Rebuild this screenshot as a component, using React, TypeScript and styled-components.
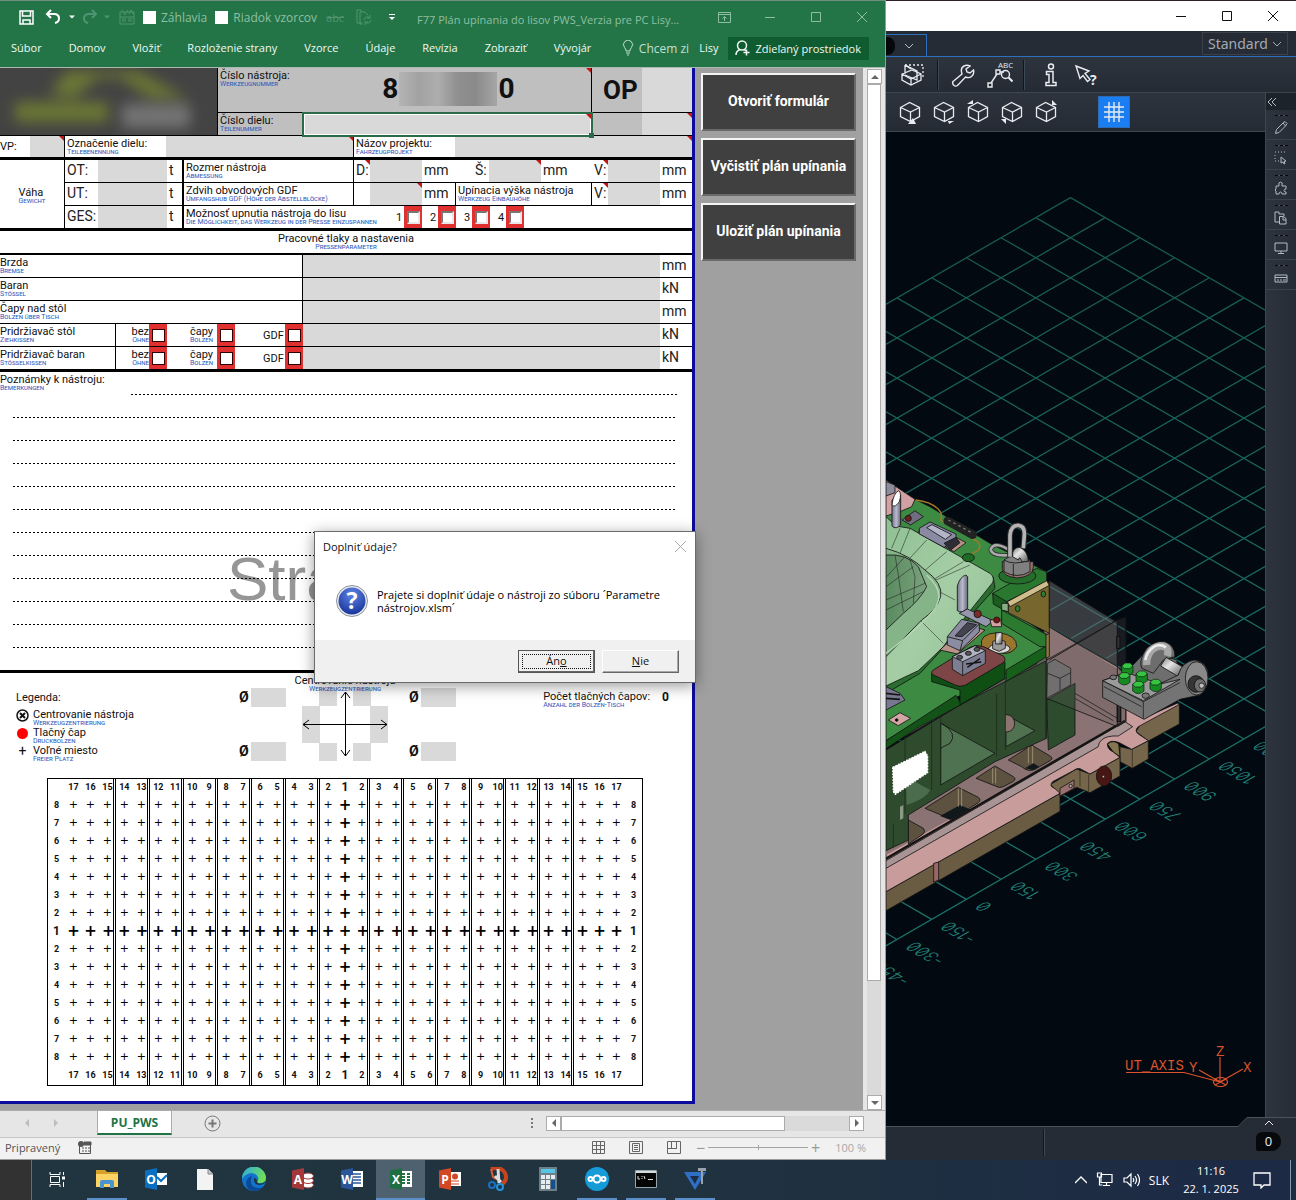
import React from "react";
import styled, { createGlobalStyle, css } from "styled-components";

const UI = `"Open Sans", "Noto Sans", sans-serif`;
const FORM = `Roboto, "Liberation Sans", sans-serif`;
const GREY = "#d9d9d9";

const GlobalStyle = createGlobalStyle`
  *, *::before, *::after { box-sizing: border-box; }
  body { margin: 0; background: #1f3039; font-family: ${UI}; font-size: 12px; color: #111; }
  button, input, select { font: inherit; color: inherit; margin: 0; padding: 0; border: 0; border-radius: 0; background: none; }
  svg { display: block; flex-shrink: 0; }
`;

/* ---------- shell ---------- */
const Page = styled.div`
  display: flex;
  flex-direction: column;
  min-height: 100vh;
  overflow: hidden;
`;
const Desktop = styled.main`
  flex: 1;
  display: grid;
  grid-template-columns: minmax(0, 886fr) minmax(0, 410fr);
  position: relative;
`;
const Row = styled.div<{ $gap?: number }>`
  display: flex;
  align-items: center;
  gap: ${(p) => p.$gap ?? 0}px;
`;
const Spacer = styled.div`
  flex: 1;
`;

/* ---------- spreadsheet window ---------- */
const ExcelWindow = styled.section`
  display: flex;
  flex-direction: column;
  border-top: 1px solid #6f8f7e;
  border-right: 1px solid #9a9a9a;
  background: #e6e6e6;
  min-width: 0;
`;
const ExcelTitle = styled.header`
  height: 32px;
  display: flex;
  align-items: center;
  background: #237547;
  color: #8fbfa3;
  padding-left: 15px;
  font-size: 11px;
`;
const QuickButton = styled.button<{ $w: number; $dim?: boolean }>`
  width: ${(p) => p.$w}px;
  height: 24px;
  display: grid;
  place-items: center;
  color: ${(p) => (p.$dim ? "#4f9470" : "#fff")};
`;
const QuickCheck = styled.label`
  display: flex;
  align-items: center;
  gap: 5px;
  white-space: nowrap;
  font-size: 12px;
  input {
    appearance: none;
    width: 13px;
    height: 13px;
    background: #fff;
  }
`;
const WindowTitle = styled.h1`
  flex: 1;
  min-width: 0;
  margin: 0;
  padding: 6px 4px 0 8px;
  font-size: 11px;
  font-weight: 400;
  line-height: 16px;
  white-space: nowrap;
  overflow: hidden;
  text-overflow: ellipsis;
`;
const CaptionButton = styled.button`
  flex: 0 0 46px;
  height: 30px;
  display: grid;
  place-items: center;
`;
const RibbonTabs = styled.nav`
  height: 35px;
  display: flex;
  align-items: center;
  justify-content: space-between;
  background: #237547;
  border-bottom: 1px solid #a9b9b0;
  color: #f1f8f4;
  padding: 0 16px 4px 11px;
  white-space: nowrap;
`;
const RibbonTab = styled.button`
  font-size: 11px;
  line-height: 22px;
`;
const TellMe = styled.button`
  display: flex;
  align-items: center;
  gap: 5px;
  color: #c5dfd0;
`;
const ShareButton = styled.button`
  display: flex;
  align-items: center;
  gap: 5px;
  height: 23px;
  padding: 0 8px 0 7px;
  font-size: 11px;
  font-weight: 500;
  background: #0f5c30;
`;
const SheetArea = styled.div`
  flex: 1;
  display: flex;
  align-items: stretch;
  background: #a0a0a0;
`;
const Sheet = styled.form`
  flex: 0 0 695px;
  align-self: flex-start;
  background: #fff;
  border-right: 3px solid #0b0b9c;
  border-bottom: 3px solid #0b0b9c;
  margin-bottom: 6px;
  font-family: ${FORM};
  font-size: 11px;
  color: #111;
  overflow: hidden;
`;
const MacroPanel = styled.div`
  flex: 1;
  display: flex;
  flex-direction: column;
  gap: 7px;
  padding: 5px 7px 0 6px;
`;
const MacroButton = styled.button`
  height: 58px;
  padding-bottom: 2px;
  font-family: ${FORM};
  font-size: 14px;
  font-weight: 700;
  color: #fff;
  background: #404040;
  border: 2px solid;
  border-color: #f4f4f4 #6a6a6a #6a6a6a #f4f4f4;
`;
const VScroll = styled.div`
  width: 22px;
  background: #e6e6e6;
  padding: 1px 4px 0;
  display: flex;
  flex-direction: column;
`;
const ScrollButton = styled.button`
  flex: 0 0 15px;
  width: 15px;
  height: 15px;
  display: grid;
  place-items: center;
  background: #fff;
  border: 1px solid #ababab;
  color: #666;
`;
const VThumb = styled.div`
  flex: 897;
  background: #fff;
  border: 1px solid #ababab;
`;
const VTrack = styled.div`
  flex: 114;
  background: #dadada;
`;

/* ---------- form cells ---------- */
const FRow = styled.div<{ $h: number; $line?: number }>`
  display: flex;
  height: ${(p) => p.$h}px;
  border-bottom: ${(p) => p.$line ?? 1}px solid #000;
`;
const noteMark = css`
  position: relative;
  &::after {
    content: "";
    position: absolute;
    top: 0;
    right: 0;
    border-top: 5px solid #c01818;
    border-left: 5px solid transparent;
  }
`;
const Cell = styled.div<{ $w?: number; $bg?: string; $line?: number; $note?: boolean; $pad?: number; $end?: boolean }>`
  flex: ${(p) => (p.$w ? `0 0 ${p.$w}px` : "1 1 0")};
  min-width: 0;
  display: flex;
  align-items: center;
  justify-content: ${(p) => (p.$end ? "flex-end" : "flex-start")};
  padding-left: ${(p) => p.$pad ?? 0}px;
  background: ${(p) => p.$bg ?? "transparent"};
  border-right: ${(p) => p.$line ?? 0}px solid #000;
  white-space: nowrap;
  ${(p) => p.$note && noteMark}
`;
const Field = styled.input`
  flex: 1;
  min-width: 0;
  width: 100%;
  height: 100%;
  background: ${GREY};
  padding: 0 4px;
  outline: none;
`;
const Selected = styled.div`
  flex: 0 0 291px;
  position: relative;
  z-index: 1;
  margin: -1px -1px -2px 0;
  border: 2px solid #2c6b47;
  background: #fff;
  padding: 1px;
  ${noteMark}
  &::before {
    content: "";
    position: absolute;
    right: -3px;
    bottom: -3px;
    width: 5px;
    height: 5px;
    background: #2c6b47;
  }
  input { display: block; }
`;
const Unit = styled.span`
  font-size: 14px;
  line-height: 16px;
  padding-bottom: 2px;
  color: #222;
`;
const Duo = styled.span<{ $align?: string }>`
  display: flex;
  flex-direction: column;
  align-items: ${(p) => p.$align ?? "flex-start"};
  white-space: nowrap;
  line-height: 11px;
`;
const German = styled.small`
  font-size: 7px;
  line-height: 7px;
  font-variant: small-caps;
  color: #2f5bbd;
`;
const Logo = styled.div`
  flex: 0 0 218px;
  border-right: 1px solid #000;
  background: #434343;
  position: relative;
  overflow: hidden;
  svg { filter: blur(7px); }
`;
const HeadRight = styled.div`
  flex: 1;
  min-width: 0;
`;
const BigText = styled.strong<{ $size: number }>`
  font-size: ${(p) => p.$size}px;
  line-height: 30px;
  font-weight: 700;
`;
const Redacted = styled.span`
  width: 98px;
  height: 34px;
  background: linear-gradient(90deg, #b4b4b4, #a2a2a2 20%, #adadad 40%, #8f8f8f 60%, #8a8a8a 78%, #a6a6a6);
`;
const RedBox = styled.label<{ $sunken?: boolean }>`
  flex: 0 0 18px;
  align-self: stretch;
  background: #e0302f;
  display: flex;
  align-items: center;
  justify-content: center;
  input {
    appearance: none;
    width: 13px;
    height: 13px;
    background: #fff;
    border: 1px solid #300;
    ${(p) => p.$sunken && "border: 2px solid; border-color: #777 #e8e8e8 #e8e8e8 #777;"}
  }
`;
const Notes = styled.div`
  height: 301px;
  border-bottom: 3px solid #000;
  position: relative;
`;
const Watermark = styled.div`
  position: absolute;
  left: 227px;
  top: 172px;
  font-family: "Liberation Sans", Arial, sans-serif;
  font-size: 62px;
  line-height: 70px;
  color: #969696;
`;
const NoteRow = styled.div`
  position: relative;
  display: flex;
  height: 23px;
  padding: 0 15px 0 0;
`;
const NoteLabel = styled.div<{ $w: number }>`
  flex: 0 0 ${(p) => p.$w}px;
  padding-top: 2px;
`;
const NoteInput = styled.input`
  flex: 1;
  min-width: 0;
  outline: none;
  background: repeating-linear-gradient(90deg, #000 0 2px, transparent 2px 4px) left bottom / 100% 1px no-repeat;
`;
const LegendArea = styled.div`
  display: flex;
  height: 105px;
`;
const LegendList = styled.div`
  flex: 0 0 236px;
  padding: 18px 0 0 16px;
`;
const LegendItem = styled.div`
  display: grid;
  grid-template-columns: 17px 1fr;
  height: 18px;
`;
const Mark = styled.span`
  width: 13px;
  height: 13px;
  text-align: center;
  font-size: 14px;
  line-height: 12px;
`;
const Diameters = styled.div<{ $w: number }>`
  flex: 0 0 ${(p) => p.$w}px;
  display: flex;
  flex-direction: column;
  justify-content: space-between;
  align-items: flex-start;
  padding: 15px 0 17px;
`;
const Diameter = styled.label<{ $lead: number }>`
  display: grid;
  grid-template-columns: 12px 35px;
  padding-left: ${(p) => p.$lead}px;
  height: 19px;
  line-height: 19px;
  font-size: 14px;
  font-weight: 700;
`;
const Centering = styled.div`
  flex: 0 0 86px;
  min-width: 0;
  display: grid;
  grid-template-columns: 86px;
  padding-bottom: 17px;
  > * { grid-area: 1 / 1; }
  > svg { align-self: end; }
  > span { padding-top: 2px; }
`;
const PinCount = styled.div`
  flex: 1;
  display: flex;
  justify-content: flex-end;
  gap: 12px;
  padding: 18px 23px 0 0;
  strong { font-size: 12px; line-height: 12px; }
`;
const PinTable = styled.table`
  margin: 0 0 15px 47px;
  width: 596px;
  table-layout: fixed;
  border-spacing: 0;
  border: 1px solid #000;
  font-size: 9px;
  font-weight: 700;
  text-align: center;
  td, th { height: 18px; line-height: 16px; overflow: visible; }
`;
const PinCell = styled.td<{ $line?: boolean; $big?: boolean }>`
  padding: 0 0 2px ${(p) => (p.$line ? 3 : 0)}px;
  border-right: ${(p) => (p.$line ? "3px double #000" : "0")};
  font-family: "DejaVu Sans", sans-serif;
  font-size: ${(p) => (p.$big ? 15 : 11)}px;
  font-weight: ${(p) => (p.$big ? 700 : 400)};
  color: #000;
`;
const PinHead = styled.th<{ $line?: boolean; $big?: boolean }>`
  padding: 0 0 2px ${(p) => (p.$line ? 3 : 0)}px;
  border-right: ${(p) => (p.$line ? "3px double #000" : "0")};
  font-size: ${(p) => (p.$big ? 12 : 9)}px;
`;

/* ---------- sheet tabs and status ---------- */
const SheetTabs = styled.div`
  height: 28px;
  display: flex;
  align-items: center;
  border-top: 1px solid #ababab;
  border-bottom: 1px solid #c6c6c6;
  padding: 0 21px 2px 0;
  color: #777;
`;
const TabArrow = styled.button`
  width: 29px;
  color: #bdbdbd;
  display: grid;
  place-items: center;
`;
const SheetTab = styled.button`
  align-self: flex-start;
  width: 75px;
  height: 24px;
  margin: 0 26px 0 27px;
  background: #fff;
  border: 1px solid #ababab;
  border-top: 0;
  border-bottom: 2px solid #217346;
  color: #217346;
  font-weight: 700;
`;
const HScroll = styled.div`
  width: 318px;
  display: flex;
  margin-left: 12px;
  background: #dadada;
`;
const HThumb = styled.div`
  flex: 0 0 224px;
  background: #fff;
  border: 1px solid #ababab;
`;
const StatusBar = styled.footer`
  height: 22px;
  display: flex;
  align-items: center;
  padding: 0 19px 2px 5px;
  background: #f1f1f1;
  border-bottom: 1px solid #9a9a9a;
  font-size: 11px;
  color: #555;
`;
const ViewButton = styled.button`
  width: 38px;
  display: grid;
  place-items: center;
  color: #666;
`;
const Zoom = styled.input`
  appearance: none;
  width: 100px;
  height: 11px;
  background: linear-gradient(#a5a5a5, #a5a5a5) center / 100% 1px no-repeat;
  &::-webkit-slider-thumb {
    appearance: none;
    width: 1px;
    height: 5px;
    background: #a5a5a5;
  }
`;
const ZoomStep = styled.button`
  width: 15px;
  font-size: 16px;
  line-height: 16px;
  color: #999;
`;
const ZoomLabel = styled.span`
  width: 43px;
  text-align: right;
  color: #a8a8a8;
`;

/* ---------- dialog ---------- */
const Dialog = styled.section`
  position: absolute;
  left: 314px;
  top: 531px;
  width: 382px;
  height: 152px;
  z-index: 2;
  display: flex;
  flex-direction: column;
  background: #fff;
  border: 1px solid #6b6b6b;
  box-shadow: 0 3px 14px rgba(0, 0, 0, 0.4);
  font-size: 11px;
`;
const DialogTitle = styled.div`
  display: flex;
  justify-content: space-between;
  align-items: center;
  height: 28px;
  padding: 0 9px 0 8px;
  color: #111;
  h2 { margin: 0; font-size: 11px; font-weight: 400; }
  button { color: #aaa; }
`;
const DialogBody = styled.div`
  flex: 1;
  display: flex;
  align-items: flex-start;
  gap: 9px;
  padding: 25px 20px 0 21px;
  p { flex: 1; margin: 0; padding-top: 3px; font-size: 11px; line-height: 13px; color: #000; }
`;
const DialogFoot = styled.div`
  height: 42px;
  display: flex;
  justify-content: flex-end;
  align-items: center;
  gap: 7px;
  padding-right: 16px;
  background: #f0f0f0;
`;
const DialogButton = styled.button<{ $focus?: boolean }>`
  width: 77px;
  height: 23px;
  padding-bottom: 1px;
  background: #f0f0f0;
  border: 1px solid;
  border-color: #fff #666 #666 #fff;
  box-shadow: inset -1px -1px 0 #a8a8a8;
  ${(p) =>
    p.$focus &&
    css`
      border-color: #555;
      box-shadow: inset -1px -1px 0 #666;
      outline: 1px dotted #111;
      outline-offset: -5px;
    `}
`;

/* ---------- CAD window ---------- */
const CadWindow = styled.section`
  display: flex;
  flex-direction: column;
  min-width: 0;
  background: #262c35;
  border-top: 1px solid #2d2227;
  color: #e8ecf0;
`;
const CadTitle = styled.header`
  height: 30px;
  display: flex;
  justify-content: flex-end;
  background: #fff;
  color: #111;
`;
const CadTabs = styled.div`
  height: 26px;
  display: flex;
  justify-content: space-between;
  border-bottom: 1px solid #2c6fbd;
`;
const CadTab = styled.button`
  width: 41px;
  height: 22px;
  align-self: flex-end;
  display: flex;
  align-items: center;
  gap: 9px;
  color: #b9c0c8;
  border-top: 1px solid #2c6fbd;
  border-right: 1px solid #2c6fbd;
  &::before {
    content: "";
    width: 9px;
    height: 18px;
    background: #05080b;
    border-radius: 0 8px 8px 0;
  }
`;
const SelectWrap = styled.label`
  display: flex;
  align-items: center;
  width: 86px;
  height: 23px;
  margin: 1px 8px 0 0;
  padding: 0 5px;
  border: 1px solid #3a4149;
  color: #a3aab2;
  font-family: "Noto Sans", sans-serif;
  font-size: 14px;
  select { appearance: none; flex: 1; min-width: 0; outline: none; }
`;
const CadBar = styled.div<{ $h: number; $pad: number; $gap: number }>`
  height: ${(p) => p.$h}px;
  display: flex;
  align-items: center;
  gap: ${(p) => p.$gap}px;
  padding-left: ${(p) => p.$pad}px;
  background: linear-gradient(#2d343e, #252b34);
  border-bottom: 1px solid #3d464f;
`;
const ToolButton = styled.button<{ $on?: boolean }>`
  flex: 0 0 auto;
  width: ${(p) => (p.$on ? 32 : 24)}px;
  height: ${(p) => (p.$on ? 32 : 28)}px;
  margin-left: ${(p) => (p.$on ? 30 : 0)}px;
  display: grid;
  place-items: center;
  background: ${(p) => (p.$on ? "#1a7ef2" : "none")};
  border: ${(p) => (p.$on ? "1px solid #2d6cb5" : "0")};
`;
const Divider = styled.i<{ $h: number }>`
  width: 2px;
  height: ${(p) => p.$h}px;
  background: #10161d;
  border-right: 1px solid #3c4957;
`;
const CadMain = styled.div`
  flex: 1;
  display: flex;
`;
const CadLeft = styled.div`
  flex: 1;
  min-width: 0;
  display: flex;
  flex-direction: column;
`;
const Viewport = styled.div`
  flex: 1;
  position: relative;
  background: #020910;
  svg { position: absolute; inset: 0; width: 100%; height: 100%; }
`;
const SideBar = styled.aside`
  width: 31px;
  border-left: 1px solid #3d464f;
  background: linear-gradient(90deg, #2d343e, #262c35);
  color: #b4bac1;
`;
const SideTop = styled.button`
  width: 100%;
  height: 17px;
  padding-left: 1px;
  background: #1d232a;
  display: flex;
  align-items: center;
`;
const SideButton = styled.button`
  width: 100%;
  height: 30px;
  display: flex;
  flex-direction: column;
  align-items: center;
  gap: 5px;
  padding-top: 5px;
  border-bottom: 1px solid #3a424b;
  &::before {
    content: "";
    width: 13px;
    height: 1px;
    background: repeating-linear-gradient(90deg, #05080b 0 3px, #4a525b 3px 5px);
  }
`;
const CadStatus = styled.footer`
  height: 34px;
  position: relative;
  display: flex;
  justify-content: space-between;
  align-items: center;
  padding: 0 15px 2px 157px;
  border-top: 1px solid #4a525b;
`;
const CadFlap = styled.div`
  position: absolute;
  right: 0;
  top: -10px;
`;
const Badge = styled.output`
  width: 25px;
  height: 19px;
  margin-top: -2px;
  background: #07090c;
  border-radius: 6px 9px 9px 2px;
  text-align: center;
  font-size: 13px;
  line-height: 19px;
  z-index: 1;
`;

/* ---------- taskbar ---------- */
const Taskbar = styled.footer`
  height: 40px;
  display: flex;
  align-items: stretch;
  background: linear-gradient(90deg, #20353f 0%, #20333f 50%, #1d2a45 95%);
  color: #fff;
`;
const StartBox = styled.button`
  width: 32px;
  background: #323232;
  border-right: 1px solid #6c6c6c;
`;
const TaskButton = styled.button<{ $w?: number; $active?: boolean; $open?: boolean }>`
  width: ${(p) => p.$w ?? 49}px;
  display: grid;
  place-items: center;
  background: ${(p) => (p.$active ? "#4d626e" : "none")};
  border-bottom: 2px solid transparent;
  ${(p) =>
    (p.$active || p.$open) &&
    css`
      background-image: linear-gradient(#5b8fca, #5b8fca);
      background-origin: border-box;
      background-clip: border-box;
      background-repeat: no-repeat;
      background-position: center bottom;
      background-size: ${p.$active ? 49 : 40}px 2px;
    `}
`;
const Tray = styled.div`
  display: flex;
  align-items: center;
  gap: 9px;
  padding-right: 4px;
  button { display: grid; place-items: center; font-size: 12px; }
`;
const Clock = styled.time`
  width: 66px;
  text-align: center;
  font-size: 11px;
  line-height: 18px;
  white-space: nowrap;
`;
const ShowDesktop = styled.button`
  width: 2px;
  height: 40px;
  margin-left: 10px;
  border-left: 1px solid #8794a3;
`;

/* ---------- icons ---------- */
type IconProps = { w?: number; h?: number; vb?: string; sw?: number; children: React.ReactNode };
const Ico = ({ w = 16, h, vb, sw = 1, children }: IconProps) => (
  <svg width={w} height={h ?? w} viewBox={vb ?? `0 0 ${w} ${h ?? w}`} fill="none" stroke="currentColor" strokeWidth={sw} aria-hidden="true">
    {children}
  </svg>
);
const Caret = ({ dir = "down" }: { dir?: "down" | "up" | "left" | "right" }) => {
  const d = { down: "M0 2h8l-4 4z", up: "M0 6h8L4 2z", left: "M6 0v8L2 4z", right: "M2 0v8l4-4z" }[dir];
  return <Ico w={8}><path d={d} fill="currentColor" stroke="none" /></Ico>;
};
const SmallCaret = () => <Ico w={6}><path d="M0 1.500h6l-3 3z" fill="currentColor" stroke="none" /></Ico>;
const Cross = ({ s = 11 }: { s?: number }) => <Ico w={s}><path d={`M0 0L${s} ${s}M${s} 0L0 ${s}`} /></Ico>;
const MinIcon = () => <Ico w={10}><path d="M0 5.500h10" /></Ico>;
const MaxIcon = () => <Ico w={10}><path d="M.5.5h9v9h-9z" /></Ico>;
const Chevron = ({ up }: { up?: boolean }) => <Ico w={10}><path d={up ? "M1 7l4-4 4 4" : "M1 3l4 4 4-4"} /></Ico>;

const Cube = ({ mark }: { mark: string }) => (
  <Ico w={24} sw={1.3}>
    <path d="M2.500 7.500L11.500 2.500L21.500 7.500V16.500L12.500 21.500L2.500 16.500zM2.500 7.500L12.500 12L21.500 7.500M12.500 12V21.500" />
    <path d={mark} fill="currentColor" stroke="none" />
  </Ico>
);

const TeamLetter = ({ letter, color, dark, kind }: { letter: string; color: string; dark: string; kind: string }) => (
  <svg width="24" height="22" viewBox="0 0 24 22" aria-hidden="true">
    {kind === "mail" && <g><path d="M10 5h13v12H10z" fill="#fff" /><path d="M13 9l4 4 6-6" stroke={color} strokeWidth="2" fill="none" /></g>}
    {kind === "db" && <g fill="#fff" stroke={dark}><ellipse cx="17" cy="17" rx="5.500" ry="3" /><ellipse cx="17" cy="12.500" rx="5.500" ry="3" /><ellipse cx="17" cy="8" rx="5.500" ry="3" /></g>}
    {kind === "doc" && <g><path d="M11 3h12v16H11z" fill="#fff" /><path d="M13 6h8M13 9h8M13 12h8M13 15h8" stroke={color} strokeWidth="1.500" /></g>}
    {kind === "grid" && <g><path d="M11 3h12v16H11z" fill="#fff" /><path d="M13 6h3M18 6h3M13 9h3M18 9h3M13 12h3M18 12h3M13 15h3M18 15h3" stroke={color} strokeWidth="1.800" /></g>}
    {kind === "chart" && <g><path d="M11 4h12v14H11z" fill="#fff" /><path d="M13 13h8M13 16h8" stroke={color} /><circle cx="17" cy="8.500" r="3" fill={color} /></g>}
    <path d="M1 2.500L13 0v22L1 19.500z" fill={dark} />
    <text x="7" y="15.500" fontSize="12" fontWeight="700" textAnchor="middle" fill="#fff" fontFamily="Open Sans, sans-serif">{letter}</text>
  </svg>
);

/* ---------- CAD scene ---------- */
const AX = 1070.5, AY = 197.6, UX = 34.7, UY = 20.05;
const gridPoint = (a: number, b: number) => `${AX + (a - b) * UX} ${AY + (a + b) * UY}`;
const gridPath = [
  ...Array.from({ length: 17 }, (_, a) => `M${gridPoint(a, 0)}L${gridPoint(a, 30)}`),
  ...Array.from({ length: 31 }, (_, b) => `M${gridPoint(0, b)}L${gridPoint(16, b)}`),
].join("");
const scaleLabels = ["1200", "1050", "900", "750", "600", "450", "300", "150", "0", "-150", "-300", "-450"];

const boltAt: [number, number][] = [[742, 628], [733, 657], [785, 652], [827, 677], [775, 683]];

const Scene = () => (
  <svg viewBox="886 132 379 994" preserveAspectRatio="xMinYMin slice" role="img" aria-label="3D model">
    <defs>
      <linearGradient id="sheetG" x1="0" y1="0" x2="1" y2="1"><stop offset="0" stopColor="#8fc093" /><stop offset=".5" stopColor="#a6cea6" /><stop offset="1" stopColor="#8dbd90" /></linearGradient>
      <linearGradient id="domeG" x1="0" y1="0" x2="1" y2="0"><stop offset="0" stopColor="#5a8a60" /><stop offset="1" stopColor="#7aa27c" /></linearGradient>
      <linearGradient id="metal" x1="0" y1="0" x2="1" y2="1"><stop offset="0" stopColor="#777" /><stop offset=".4" stopColor="#e6e6e6" /><stop offset="1" stopColor="#555" /></linearGradient>
      <linearGradient id="pin" x1="0" y1="0" x2="1" y2="0"><stop offset="0" stopColor="#77788f" /><stop offset=".5" stopColor="#b9bacc" /><stop offset="1" stopColor="#66677a" /></linearGradient>
      <linearGradient id="gridG" gradientUnits="userSpaceOnUse" x1="0" y1="200" x2="0" y2="800"><stop offset="0" stopColor="#175850" /><stop offset="1" stopColor="#1c6f68" /></linearGradient>
    </defs>
    <path d={gridPath} stroke="url(#gridG)" strokeWidth="1.300" fill="none" />
    <g fill="#218078" fontFamily="Inter, sans-serif" fontSize="16" fontWeight="300" style={{ fontFeatureSettings: '"zero"' }}>
      {scaleLabels.map((t, i) => (
        <text key={t} textAnchor="end" transform={`translate(${1262.500 - i * UX} ${740.500 + i * UY}) rotate(210) skewX(-30)`}>{t}</text>
      ))}
    </g>
    <g transform="translate(880 460) scale(.33333)" stroke="#141414" strokeWidth="2.500" strokeLinejoin="round">
      {/* base plate, side walls */}
      <path d="M768 815L780 795L898 730V792L805 843z" fill="#75664b" />
      <path d="M755 868L805 842V897L757 925L720 905V860z" fill="#75664b" />
      <path d="M512 973L590 927L630 942L720 892V948L630 998L590 982L540 1010z" fill="#75664b" />
      <path d="M18 1295L540 1000V1054L18 1352z" fill="#6a5c42" />
      <path d="M500 500L715 622L790 775L895 728V735L775 800Q762 812 775 822L805 842L755 868L718 848Q690 838 682 852Q682 868 700 876L720 892L630 942L600 926Q588 924 580 932L518 965Q505 978 525 986L540 1000L18 1295V1180L500 870z" fill="#c99c9c" />
      <path d="M682 852Q700 838 716 852L720 890L700 876z" fill="#86764f" />
      <path d="M18 1010L505 500L735 640V785L18 1185z" fill="#8b7373" stroke="none" />
      <path d="M18 1202L735 785L758 800L715 828Q680 826 665 840Q655 848 655 860L18 1225z" fill="#a89494" />
      <path d="M18 1196L735 782" strokeWidth="7" />
      <path d="M585 700L712 775M585 715L700 782" fill="none" />
      {/* pockets */}
      <g fill="#5d5140">
        <path d="M385 900L455 855L510 888Q522 895 510 902L465 928Q445 938 425 920z" />
        <path d="M288 955L345 918L400 950Q410 957 400 964L370 980Q358 986 346 978z" />
        <path d="M135 1045L235 982L295 1012Q305 1020 295 1028L225 1072Q212 1080 200 1072z" />
        <path d="M85 1080L130 1105Q138 1114 130 1122L85 1152z" />
      </g>
      <path d="M180 1068L240 1035L270 1048L212 1080z" fill="#10181c" stroke="none" />
      <path d="M435 925L460 910L478 920L460 930z" fill="#10181c" stroke="none" />
      <path d="M445 858V910M458 858V910M338 925V970M347 925V970M235 985V1040M245 985V1040" fill="none" stroke="#a3977b" />
      {/* lower body */}
      <path d="M500 720L585 670V825L505 870z" fill="#2d4c2d" />
      <path d="M503 610L525 598L572 625V675L500 715z" fill="#777" />
      <path d="M503 640L540 655L572 638M540 655V690" fill="none" />
      <path d="M18 870L240 735L500 590V835L345 905L85 1065V1140L18 1172z" fill="#2f4b2e" />
      <path d="M182 790L345 880L182 975z" fill="#4f7250" />
      <path d="M378 765L465 812L378 860z" fill="#507251" />
      <path d="M78 950L150 990Q140 1015 80 1035z" fill="#4c6d4c" stroke="none" />
      <ellipse cx="380" cy="790" rx="24" ry="26" fill="#8d7470" />
      <path d="M350 700H376V870L350 885z" fill="#2f4b2e" stroke="none" />
      <path d="M155 790V990M182 770V975M350 700V890M376 665V870M497 590V835M75 830V1060M40 1090V1160" fill="none" stroke="#1b2c1b" />
      <path d="M60 1040L70 1035V1075L60 1080z" fill="#8a9a86" stroke="none" />
      <path d="M185 790Q235 820 210 850Q190 860 182 865" fill="none" />
      <path d="M75 810L155 765L240 735L500 582V602L395 655L240 735L75 830z" fill="#5f6158" />
      <path d="M395 630L470 595V612L395 650z" fill="#6b6660" />
      {/* top plate */}
      <path d="M18 165L105 118L150 140L330 250L500 335V365L360 430L505 527V565L378 640L230 712L18 842z" fill="#3d8a42" />
      <path d="M18 842L228 706L245 733L110 805L18 866z" fill="#145317" />
      <path d="M378 630L500 557V590L378 665z" fill="#17601b" />
      <path d="M365 450L505 527V560L480 560L365 490z" fill="#2b7a30" />
      <path d="M338 400L470 325L500 335V365L380 425L345 418z" fill="#2a7830" />
      <path d="M338 400L380 425V455L340 432z" fill="#1a5d1e" />
      <path d="M365 430L385 430V455L365 450z" fill="#86ad85" />
      <path d="M18 60L105 118L95 140L60 155L18 168z" fill="#d2a2a2" />
      <path d="M18 65L45 75V98L18 108z" fill="#8c8c9c" />
      {/* formed sheet */}
      <path d="M340 352L345 385L285 452L245 505L120 640L18 700V665L240 480z" fill="#2a6d2e" />
      <path d="M18 170L48 198L90 205L330 340Q345 352 338 368L280 440L245 485L190 560Q150 600 115 632L18 678z" fill="url(#sheetG)" />
      <path d="M60 205L35 265M90 205L60 280M140 240L80 305M200 275L130 335M250 305L150 365M270 315L145 370M150 380L225 420M120 480L190 550" fill="none" strokeWidth="1.500" />
      <path d="M18 265Q90 285 135 330Q190 370 182 410Q170 450 125 480L18 590z" fill="#86b489" />
      <path d="M18 285Q80 280 115 320L140 380Q120 420 70 460L18 510z" fill="url(#domeG)" />
      <path d="M18 380L100 320M18 420L135 370M18 450L130 395M45 285L55 345L70 455M90 300L105 350L100 430M75 290L20 350" fill="none" strokeWidth="1.500" />
      <path d="M18 580Q160 470 172 430Q190 390 140 345" fill="none" stroke="#b6d8b5" strokeWidth="4" />
      {/* sensors, rods */}
      <path d="M108 120Q150 125 172 145Q190 160 182 180L200 190" fill="none" stroke="#a57b2b" strokeWidth="4" />
      <path d="M275 235Q310 250 295 270L265 288Q250 300 262 305" fill="none" stroke="#a57b2b" strokeWidth="4" />
      <path d="M203 183L278 224" stroke="#222" strokeWidth="26" strokeLinecap="round" />
      <path d="M205 180L275 218" stroke="#777" strokeWidth="4" strokeDasharray="8 9" />
      <path d="M66 180L105 152L130 170L92 195z" fill="#6e6e80" />
      <circle cx="85" cy="175" r="9" fill="#6b2020" />
      <path d="M115 215L150 190L258 248L222 275z" fill="#b78f87" />
      <path d="M118 205L150 186L228 222V240L192 262L118 222z" fill="#8a8ba2" />
      <path d="M140 203L156 194L215 224L196 238z" fill="#b3b4c8" />
      <path d="M192 250L228 232L240 248L212 270z" fill="#2d2d35" />
      <path d="M36 120L62 105V195Q48 210 36 198z" fill="url(#pin)" />
      <path d="M36 135Q40 100 56 92Q66 100 58 125Q45 145 36 135z" fill="#fff" />
      <ellipse cx="265" cy="293" rx="18" ry="12" fill="#1f6a24" />
      {/* eye bolt */}
      <ellipse cx="412" cy="348" rx="56" ry="24" fill="#256d2b" />
      <path d="M367 325Q367 350 412 354Q458 350 460 322V305H367z" fill="#96706e" />
      <path d="M372 300Q400 275 450 300V335Q412 358 372 335z" fill="#808080" />
      <path d="M372 300Q400 318 450 300M400 312V350" fill="none" />
      <path d="M395 275Q345 240 332 268Q335 290 390 285" fill="none" stroke="#333" strokeWidth="13" />
      <path d="M395 275Q345 240 332 268Q335 290 390 285" fill="none" stroke="#aaa" strokeWidth="8" />
      <path d="M390 290V225Q393 195 415 196Q435 198 433 225L430 265" fill="none" stroke="#2c2c2c" strokeWidth="17" />
      <path d="M390 290V225Q393 195 415 196Q435 198 433 225L430 265" fill="none" stroke="#b5b5b5" strokeWidth="11" />
      <path d="M398 290Q395 262 420 262Q445 275 445 305H425Q420 285 415 300z" fill="url(#metal)" />
      {/* tan block */}
      <path d="M385 430L508 365V520L385 458z" fill="#77672f" />
      <path d="M382 425L500 362L508 376L390 440z" fill="#cfbd8c" />
      <path d="M498 525L508 520V590L498 595z" fill="#8c7a42" />
      <ellipse cx="413" cy="446" rx="7" ry="9" fill="#2d7b32" /><ellipse cx="490" cy="402" rx="7" ry="9" fill="#2d7b32" />
      {/* second sensor group */}
      <path d="M232 378Q240 350 258 345L263 350V445Q245 462 232 452z" fill="url(#pin)" />
      <path d="M238 460L262 447L340 482L318 500z" fill="#9496ab" />
      <circle cx="293" cy="462" r="11" fill="#7a2b25" />
      <path d="M330 480L362 478L365 500L335 500z" fill="#d3a3a3" /><circle cx="350" cy="480" r="9" fill="#7c1414" />
      <path d="M180 570L260 495L315 510L232 582z" fill="#b89489" />
      <path d="M202 530L245 478L298 490V515L240 572L202 555z" fill="#8b8ca2" />
      <path d="M225 528L262 488L290 494L246 530z" fill="#43444f" />
      <path d="M202 530L248 542L298 492M248 542L240 572" fill="none" />
      <path d="M305 560Q295 520 355 518Q412 525 410 560Q395 582 370 580z" fill="#9a752d" />
      <ellipse cx="358" cy="566" rx="32" ry="14" fill="#d9d9d9" />
      <path d="M338 545L357 536L376 545V565L357 574L338 566z" fill="#9a9a9a" />
      <path d="M347 518H366V552H347z" fill="url(#metal)" />
      <path d="M155 640L240 680L375 605V655L240 735V690L155 665z" fill="#0f4f13" />
      <path d="M160 630L270 562Q290 552 310 560L370 588Q380 598 370 608L255 676Q240 682 225 675L160 645Q150 638 160 630z" fill="#7d4545" />
      <path d="M217 590L285 557L316 572V610L248 647L217 628z" fill="#7d7e92" />
      <path d="M217 590L248 605L316 572L285 557zM248 605V647" fill="#b1b2c4" />
      <ellipse cx="239" cy="592" rx="9" ry="6" fill="#555" /><ellipse cx="265" cy="580" rx="9" ry="6" fill="#555" /><ellipse cx="291" cy="568" rx="9" ry="6" fill="#555" />
      <path d="M262 622L300 596M258 612L304 606" strokeWidth="4" />
      <path d="M18 680L60 700L75 720L18 750z" fill="#777890" /><path d="M18 700L60 705M18 715L60 718" strokeWidth="5" />
      <path d="M25 780L60 758L92 775L55 797z" fill="#d3a5a5" /><circle cx="50" cy="780" r="4" />
      {/* glass panel */}
      <path d="M508 362L712 487V617L508 500z" fill="#6d6d6d" fillOpacity=".5" />
      <path d="M500 600L712 480L737 472V785L712 800L500 715" fill="#5d5555" fillOpacity=".25" />
      <path d="M712 485V795M508 600L712 480M738 475V785" fill="none" />
      <path d="M710 530H720V565H710zM712 725H722V785H712z" fill="#333" strokeWidth="4" />
      {/* shackle */}
      <path d="M735 640L800 572L890 600L900 660L800 700L735 660z" fill="#6e6e6e" />
      <path d="M785 625Q775 600 800 565Q825 540 855 545Q885 555 885 590L850 600Q835 620 820 640z" fill="#6d6d6d" />
      <path d="M800 615Q798 590 815 570Q835 553 855 560Q868 568 862 588" fill="none" stroke="#a8a8a8" strokeWidth="22" />
      <path d="M796 600Q800 575 822 560Q840 550 858 562" fill="none" stroke="#ececec" strokeWidth="8" />
      <path d="M858 592L910 622L892 648L842 618z" fill="url(#metal)" />
      <path d="M668 662L735 638L800 690L895 645Q905 605 945 600Q985 608 985 650Q980 690 960 705L900 718L792 778L668 712z" fill="#747474" />
      <path d="M668 662L790 725L900 668M790 725V775M672 680L785 740" fill="none" stroke="#222" />
      <path d="M668 662L740 638L842 672L900 658L790 722z" fill="#9b9b9b" />
      <ellipse cx="950" cy="655" rx="34" ry="50" fill="#8a8a8a" /><ellipse cx="948" cy="672" rx="24" ry="25" fill="#353535" /><ellipse cx="960" cy="676" rx="17" ry="20" fill="#6e6e6e" /><circle cx="965" cy="677" r="8" fill="#bbb" />
      <ellipse cx="700" cy="652" rx="10" ry="7" fill="#777" /><ellipse cx="797" cy="707" rx="11" ry="8" fill="#777" />
      {boltAt.map(([x, y]) => (
        <g key={`${x}-${y}`} strokeWidth="2">
          <path d={`M${x - 17} ${y - 10}V${y + 10}Q${x} ${y + 26} ${x + 17} ${y + 10}V${y - 10}z`} fill="#158a20" />
          <path d={`M${x - 17} ${y - 10}L${x - 7} ${y - 19}H${x + 9}L${x + 17} ${y - 10}L${x + 7} ${y - 2}H${x - 9}z`} fill="#35c542" />
        </g>
      ))}
      {/* tag, plug and marker */}
      <path d="M38 922L135 874L143 888V938L46 1003L40 995z" fill="#fff" stroke="#fff" strokeWidth="4" strokeDasharray="5 4" />
      <ellipse cx="672" cy="948" rx="23" ry="30" fill="#481615" /><circle cx="670" cy="950" r="4" fill="#d2b48c" />
      <path d="M540 985L582 960V985L540 1008z" fill="#9b6f6f" /><circle cx="572" cy="978" r="5" fill="#aaa" />
      <path d="M161 1210L176 1206V1260L161 1266z" fill="#9a6666" />
      <path d="M626 945V995M757 870V925M600 930V980" stroke="#3a3122" />
    </g>
    <g stroke="#d9532c" strokeWidth="1.200" fill="none">
      <path d="M1126 1072.500H1184L1220 1082L1199 1070M1220 1082V1057M1220 1082L1243 1069" />
      <ellipse cx="1220.500" cy="1082" rx="7" ry="4.500" /><path d="M1215 1079l11 6M1226 1079l-11 6" />
    </g>
    <g fill="#d9532c" fontFamily="Liberation Mono, monospace" fontSize="14">
      <text x="1125" y="1070">UT_AXIS</text><text x="1189" y="1072">Y</text><text x="1216" y="1056">Z</text><text x="1243" y="1072">X</text>
    </g>
  </svg>
);

/* ---------- form pieces ---------- */
const Label = ({ sk, de, align, htmlFor }: { sk: string; de: string; align?: string; htmlFor?: string }) => (
  <Duo $align={align}>
    {htmlFor ? <label htmlFor={htmlFor}>{sk}</label> : sk}
    <German lang="de">{de}</German>
  </Duo>
);
const Value = ({ w, label, note, id }: { w?: number; label: string; note?: boolean; id?: string }) => (
  <Cell $w={w} $note={note}><Field id={id} aria-label={label} /></Cell>
);
const Tick = ({ label, sunken }: { label: string; sunken?: boolean }) => (
  <RedBox $sunken={sunken}><input type="checkbox" aria-label={label} /></RedBox>
);

const WeightRow = ({ name, h, line, children }: { name: string; h: number; line?: number; children: React.ReactNode }) => (
  <FRow $h={h} $line={line}>
    <Cell $w={33} $pad={2}><Unit>{name}</Unit></Cell>
    <Value w={69} label={name} />
    <Cell $w={17} $pad={2} $line={2}><Unit>t</Unit></Cell>
    {children}
  </FRow>
);

const holdRows: [string, string][] = [["Pridržiavač stôl", "Ziehkissen"], ["Pridržiavač baran", "Stösselkissen"]];
const colNumbers = [...Array.from({ length: 17 }, (_, i) => 17 - i), ...Array.from({ length: 16 }, (_, i) => i + 2)];
const rowNumbers = [8, 7, 6, 5, 4, 3, 2, 1, 2, 3, 4, 5, 6, 7, 8];
const lineAfter = new Set([2, 4, 6, 8, 10, 12, 14, 17, 19, 21, 23, 25, 27, 29]);

const HeadRow = () => (
  <tr>
    <PinHead />
    {colNumbers.map((n, i) => <PinHead key={i} $line={lineAfter.has(i)} $big={n === 1} scope="col">{n}</PinHead>)}
    <PinHead />
  </tr>
);

const WeightBlock = styled.div`display: flex;`;
const WeightTitle = styled.div`
  flex: 0 0 65px;
  display: flex;
  align-items: center;
  justify-content: center;
  border-right: 1px solid #000;
  border-bottom: 3px solid #000;
  padding-top: 4px;
`;
const WeightRows = styled.div`flex: 1; min-width: 0;`;
const HeadBlock = styled.div`display: flex; border-bottom: 1px solid #000;`;
const HeadLine = styled.div<{ $h: number; $rule?: boolean }>`
  display: flex;
  height: ${(p) => p.$h}px;
  border-bottom: ${(p) => (p.$rule ? "1px solid #000" : "0")};
`;
const NumberCell = styled.div`
  flex: 0 0 374px;
  display: flex;
  align-items: flex-start;
  padding: 2px 0 0 2px;
  background: #bfbfbf;
  border-right: 1px solid #000;
  ${noteMark}
`;
const ToolNumber = styled.div`
  flex: 1;
  display: flex;
  align-items: center;
  justify-content: center;
  gap: 1px;
  padding: 2px 0 0 16px;
`;
const CentreTitle = styled.div`flex: 1; display: flex; justify-content: center; align-items: center;`;

const FormSheet = () => (
  <Sheet onSubmit={(e) => e.preventDefault()}>
    <HeadBlock>
      <Logo>
        <svg width="217" height="67" viewBox="0 0 217 67" aria-hidden="true">
          <path d="M15 34H108V54H15zM50 26L66 3H138L188 30H150L120 10H98L74 30z" fill="#6b7735" />
          <path d="M122 36H190V60H122z" fill="#747474" />
        </svg>
      </Logo>
      <HeadRight>
        <HeadLine $h={45} $rule>
          <NumberCell>
            <Label sk="Číslo nástroja:" de="Werkzeugnummer" />
            <ToolNumber><BigText $size={28}>8</BigText><Redacted /><BigText $size={28}>0</BigText></ToolNumber>
          </NumberCell>
          <Cell $w={50} $bg="#bfbfbf" $pad={11}><BigText $size={26}>OP</BigText></Cell>
          <Value label="OP" />
        </HeadLine>
        <HeadLine $h={22}>
          <Cell $w={84} $bg="#bfbfbf" $pad={2}><Label sk="Číslo dielu:" de="Teilenummer" htmlFor="part" /></Cell>
          <Selected><Field id="part" aria-label="Číslo dielu" /></Selected>
          <Cell $w={50} $bg="#bfbfbf" />
          <Value label="OP dielu" note />
        </HeadLine>
      </HeadRight>
    </HeadBlock>
    <FRow $h={24} $line={3}>
      <Cell $w={30}>VP:</Cell>
      <Cell $w={35} $line={1} $note><Field aria-label="VP" /></Cell>
      <Cell $w={101} $pad={2}><Label sk="Označenie dielu:" de="Teilebenennung" htmlFor="name" /></Cell>
      <Cell $w={188} $line={1} $note><Field id="name" /></Cell>
      <Cell $w={101} $pad={2}><Label sk="Názov projektu:" de="Fahrzeugprojekt" htmlFor="project" /></Cell>
      <Value id="project" label="Názov projektu" note />
    </FRow>
    <WeightBlock>
      <WeightTitle><Label sk="Váha" de="Gewicht" /></WeightTitle>
      <WeightRows>
        <WeightRow name="OT:" h={23}>
          <Cell $w={170} $pad={2} $line={1}><Label sk="Rozmer nástroja" de="Abmessung" /></Cell>
          <Cell $w={16} $pad={2} $note><Unit>D:</Unit></Cell>
          <Value w={52} label="D" />
          <Cell $w={53} $pad={2}><Unit>mm</Unit></Cell>
          <Cell $w={14}><Unit>Š:</Unit></Cell>
          <Value w={52} label="Š" note />
          <Cell $w={53} $pad={2}><Unit>mm</Unit></Cell>
          <Cell $w={14} $note><Unit>V:</Unit></Cell>
          <Value w={52} label="V" />
          <Cell $pad={2}><Unit>mm</Unit></Cell>
        </WeightRow>
        <WeightRow name="UT:" h={23}>
          <Cell $w={170} $pad={2} $line={1}><Label sk="Zdvih obvodových GDF" de="Umfangshub GDF (Höhe der Abstellblöcke)" /></Cell>
          <Cell $w={16} />
          <Value w={52} label="Zdvih" note />
          <Cell $w={34} $pad={2} $line={1}><Unit>mm</Unit></Cell>
          <Cell $w={136} $pad={2} $line={1}><Label sk="Upínacia výška nástroja" de="Werkzeug Einbauhöhe" /></Cell>
          <Cell $w={16} $pad={2} $note><Unit>V:</Unit></Cell>
          <Value w={52} label="Upínacia výška" />
          <Cell $pad={2}><Unit>mm</Unit></Cell>
        </WeightRow>
        <WeightRow name="GES:" h={25} line={3}>
          <Cell $w={204} $pad={2}><Label sk="Možnosť upnutia nástroja do lisu" de="Die Möglichkeit, das Werkzeug in der Presse einzuspannen" /></Cell>
          {["1", "2", "3", "4"].map((n) => (
            <React.Fragment key={n}>
              <Cell $w={16} $pad={8}>{n}</Cell>
              <Tick label={`Lis ${n}`} sunken />
            </React.Fragment>
          ))}
        </WeightRow>
      </WeightRows>
    </WeightBlock>
    <FRow $h={24} $line={2}>
      <CentreTitle><Label sk="Pracovné tlaky a nastavenia" de="Pressenparameter" align="center" /></CentreTitle>
    </FRow>
    {[["Brzda", "Bremse", "mm"], ["Baran", "Stössel", "kN"], ["Čapy nad stôl", "Bolzen über Tisch", "mm"]].map(([sk, de, u]) => (
      <FRow $h={23} key={sk}>
        <Cell $w={303} $line={1}><Label sk={sk} de={de} htmlFor={`f-${de}`} /></Cell>
        <Value w={357} id={`f-${de}`} label={sk} />
        <Cell $pad={2}><Unit>{u}</Unit></Cell>
      </FRow>
    ))}
    {holdRows.map(([sk, de], i) => (
      <FRow $h={i ? 25 : 23} $line={i ? 3 : 1} key={sk}>
        <Cell $w={116} $line={1}><Label sk={sk} de={de} htmlFor={`f-${de}`} /></Cell>
        <Cell $w={33} $end><Label sk="bez" de="Ohne" align="flex-end" /></Cell>
        <Tick label={`${sk} bez`} />
        <Cell $w={50} $pad={23}><Label sk="čapy" de="Bolzen" /></Cell>
        <Tick label={`${sk} čapy`} />
        <Cell $w={50} $pad={28}>GDF</Cell>
        <Tick label={`${sk} GDF`} />
        <Value w={357} id={`f-${de}`} label={sk} />
        <Cell $pad={2}><Unit>kN</Unit></Cell>
      </FRow>
    ))}
    <Notes>
      <Watermark>Strana 1</Watermark>
      {Array.from({ length: 12 }, (_, i) => (
        <NoteRow key={i}>
          <NoteLabel $w={i ? 13 : 131}>{i === 0 && <Label sk="Poznámky k nástroju:" de="Bemerkungen" htmlFor="note0" />}</NoteLabel>
          <NoteInput id={`note${i}`} aria-label={`Poznámka ${i + 1}`} />
        </NoteRow>
      ))}
    </Notes>
    <LegendArea>
      <LegendList>
        <LegendItem as="div">Legenda:</LegendItem>
        <LegendItem>
          <Ico w={13} sw={1.500}><circle cx="6.500" cy="6.500" r="5.500" /><path d="M4 4l5 5M9 4l-5 5" strokeWidth="2" /></Ico>
          <Label sk="Centrovanie nástroja" de="Werkzeugzentrierung" />
        </LegendItem>
        <LegendItem>
          <Ico w={13}><circle cx="6.500" cy="6.500" r="5.500" fill="#f00" stroke="none" /></Ico>
          <Label sk="Tlačný čap" de="Druckbolzen" />
        </LegendItem>
        <LegendItem><Mark>+</Mark><Label sk="Voľné miesto" de="Freier Platz" /></LegendItem>
      </LegendList>
      <Diameters $w={66}>
        <Diameter $lead={3}>Ø<Field aria-label="Ø 1" /></Diameter>
        <Diameter $lead={3}>Ø<Field aria-label="Ø 2" /></Diameter>
      </Diameters>
      <Centering>
        <svg width="86" height="73" viewBox="0 0 86 73" aria-hidden="true">
          <path d="M17 0h18v18H17zM51 0h18v18H51zM0 18h18v37H0zM68 18h18v37H68zM17 55h18v18H17zM51 55h18v18H51z" fill={GREY} />
          <path d="M1 36.500H85M43.500 4V68M7 32L1 36.500L7 41M79 32L85 36.500L79 41M39 10L43.500 4L48 10M39 62L43.500 68L48 62" stroke="#000" fill="none" />
        </svg>
        <Label sk="Centrovanie nástroja" de="Werkzeugzentrierung" align="center" />
      </Centering>
      <Diameters $w={98}>
        <Diameter $lead={21}>Ø<Field aria-label="Ø 3" /></Diameter>
        <Diameter $lead={21}>Ø<Field aria-label="Ø 4" /></Diameter>
      </Diameters>
      <PinCount>
        <Label sk="Počet tlačných čapov:" de="Anzahl der Bolzen-Tisch" />
        <strong>0</strong>
      </PinCount>
    </LegendArea>
    <PinTable>
      <thead><HeadRow /></thead>
      <tbody>
        {rowNumbers.map((r, ri) => (
          <tr key={ri}>
            <PinHead $big={r === 1} scope="row">{r}</PinHead>
            {colNumbers.map((c, ci) => <PinCell key={ci} $line={lineAfter.has(ci)} $big={c === 1 || r === 1}>+</PinCell>)}
            <PinHead $big={r === 1}>{r}</PinHead>
          </tr>
        ))}
      </tbody>
      <tfoot><HeadRow /></tfoot>
    </PinTable>
  </Sheet>
);

const Excel = () => (
  <ExcelWindow>
    <ExcelTitle>
      <QuickButton $w={22} aria-label="Uložiť"><Ico w={15} sw={1.500}><path d="M1 1h13v13H1zM3.500 1v5h8V1M4 14v-4h7v4" /></Ico></QuickButton>
      <QuickButton $w={32} aria-label="Späť"><Ico w={16} sw={2}><path d="M6 1L2 5l4 4M2 5h7q5 0 5 4.500Q14 13 10 14" /></Ico></QuickButton>
      <QuickButton $w={6} aria-label="História"><SmallCaret /></QuickButton>
      <QuickButton $w={29} $dim aria-label="Znova"><Ico w={16} sw={2}><path d="M10 1l4 4-4 4M14 5H7Q2 5 2 9.500 2 13 6 14" /></Ico></QuickButton>
      <QuickButton $w={6} $dim aria-label="Zoznam"><SmallCaret /></QuickButton>
      <QuickButton $w={33} $dim aria-label="Formulár"><Ico w={16}><path d="M1 3h14v12H1zM1 8h14M3 10h4M3 12h4M9 10h4M9 12h4M3 1l3 5 3-5M10 5l2-4 2 4" /></Ico></QuickButton>
      <Row $gap={8}>
        <QuickCheck><input type="checkbox" />Záhlavia</QuickCheck>
        <QuickCheck><input type="checkbox" />Riadok vzorcov</QuickCheck>
      </Row>
      <QuickButton $w={36} $dim aria-label="Preškrtnúť"><s>abc</s></QuickButton>
      <QuickButton $w={22} $dim aria-label="Obnoviť"><Ico w={16}><path d="M5 3V1H1v13h5M4 3h5l3 3M4 3v12h3M8 11a3.500 3.500 0 0 1 6-2M15 11a3.500 3.500 0 0 1-6 2M14 6v3h-3M9 16v-3h3" /></Ico></QuickButton>
      <QuickButton $w={34} aria-label="Prispôsobiť"><Ico w={8}><path d="M1 1.500h6" /><path d="M1 4h6l-3 3z" fill="currentColor" stroke="none" /></Ico></QuickButton>
      <WindowTitle>F77 Plán upínania do lisov PWS_Verzia pre PC Lisy...</WindowTitle>
      <CaptionButton aria-label="Možnosti pása"><Ico w={13} h={11}><path d="M.5.5h12v10H.5zM.5 2.500h12M6.500 9V4.500M4.500 6.500l2-2 2 2" /></Ico></CaptionButton>
      <CaptionButton aria-label="Minimalizovať"><MinIcon /></CaptionButton>
      <CaptionButton aria-label="Maximalizovať"><MaxIcon /></CaptionButton>
      <CaptionButton aria-label="Zavrieť"><Cross s={10} /></CaptionButton>
    </ExcelTitle>
    <RibbonTabs>
      <Row $gap={27}>
        {["Súbor", "Domov", "Vložiť", "Rozloženie strany", "Vzorce", "Údaje", "Revízia", "Zobraziť", "Vývojár"].map((t) => <RibbonTab key={t}>{t}</RibbonTab>)}
      </Row>
      <Row $gap={10}>
        <TellMe><Ico w={12} h={16}><path d="M4 11Q4 9 2.500 7.500A4.500 4.500 0 1 1 9.500 7.500Q8 9 8 11zM4 13h4M5 15h2" /></Ico>Chcem zi</TellMe>
        <RibbonTab>Lisy</RibbonTab>
        <ShareButton><Ico w={15} h={16} sw={1.500}><circle cx="7" cy="5.500" r="4.500" /><path d="M1 15Q1 11 5 9.500M9 9.500l2 1M11.500 9.500v6M8.500 12.500h6" /></Ico>Zdieľaný prostriedok</ShareButton>
      </Row>
    </RibbonTabs>
    <SheetArea>
      <FormSheet />
      <MacroPanel>
        <MacroButton>Otvoriť formulár</MacroButton>
        <MacroButton>Vyčistiť plán upínania</MacroButton>
        <MacroButton>Uložiť plán upínania</MacroButton>
      </MacroPanel>
      <VScroll>
        <ScrollButton aria-label="Hore"><Caret dir="up" /></ScrollButton>
        <VThumb /><VTrack />
        <ScrollButton aria-label="Dole"><Caret /></ScrollButton>
      </VScroll>
    </SheetArea>
    <SheetTabs>
      <Cell $w={12} />
      <TabArrow aria-label="Predchádzajúci"><Caret dir="left" /></TabArrow>
      <TabArrow aria-label="Ďalší"><Caret dir="right" /></TabArrow>
      <SheetTab>PU_PWS</SheetTab>
      <TabArrow aria-label="Nový hárok"><Ico w={17}><circle cx="8.500" cy="8.500" r="7.500" stroke="#777" /><path d="M8.500 4.500v8M4.500 8.500h8" stroke="#777" strokeWidth="2" /></Ico></TabArrow>
      <Spacer />
      <Ico w={4} h={12}><path d="M2 1v2M2 5v2M2 9v2" strokeWidth="2" /></Ico>
      <HScroll>
        <ScrollButton aria-label="Vľavo"><Caret dir="left" /></ScrollButton>
        <HThumb /><Spacer />
        <ScrollButton aria-label="Vpravo"><Caret dir="right" /></ScrollButton>
      </HScroll>
    </SheetTabs>
    <StatusBar>
      <Row $gap={18}>
        Pripravený
        <Ico w={14} h={13}><path d="M1.500 5v7.500h11v-9H7M4 7h2M7 7h2M10 7h2M4 10h2M7 10h2M10 10h2" /><path d="M6 1h7v3H6z" fill="currentColor" /><circle cx="3" cy="3" r="3" fill="currentColor" stroke="none" /></Ico>
      </Row>
      <Spacer />
      <ViewButton aria-label="Normálne"><Ico w={13}><path d="M.5.5h12v12H.5zM.5 4.500h12M.5 8.500h12M4.500.5v12M8.500.5v12" /></Ico></ViewButton>
      <ViewButton aria-label="Rozloženie"><Ico w={14} h={13}><path d="M.5.5h13v12H.5zM3.500 2.500h7v8h-7zM5 4.500h4M5 6.500h4M5 8.500h4" /></Ico></ViewButton>
      <ViewButton aria-label="Zlomy strán"><Ico w={14} h={13}><path d="M.5.5h13v12H.5zM4.500.5v7h5v-7M9.500.5v7H.5" /></Ico></ViewButton>
      <ZoomStep aria-label="Zmenšiť">−</ZoomStep>
      <Zoom type="range" defaultValue={50} aria-label="Priblíženie" />
      <ZoomStep aria-label="Zväčšiť">+</ZoomStep>
      <ZoomLabel>100 %</ZoomLabel>
    </StatusBar>
  </ExcelWindow>
);

const cubeMarks = ["M10 24h8l-3-6z", "M16 21h6l-5 3z", "M1 4h6V0z", "M1 19h5v5z", "M18 0v5h5z"];
const sideIcons = [
  "M1.500 12.500l1-4L9 2l2-1.500 2 2L11.500 5 5 11.500zM9 2l2.500 3",
  "M1 1h1M4 1h1M7 1h1M10 1h1M1 4v1M1 7v1M1 10h1M4 10h1M7 6l5 4-2 .5 1 2-1 .5-1-2-2 1z",
  "M2 5h3Q4 1 6.500 1T8 5h4v3q-2 0-2 1.500T12 11v2H8q0-2-1.500-2T5 13H2v-3Q0 9 2 8z",
  "M1 1h4v2h5v2M1 1v10h4M5.500 5.500h4l2.500 2V13H5.500zM9 6v3h3",
  "M1 2h12v8H1zM7 10v2M4 12.500h6",
  "M1 4h12v7H1zM1 6.500h12M3 9h2M6 9h2M9 9h3",
];

const Cad = () => (
  <CadWindow>
    <CadTitle>
      <CaptionButton aria-label="Minimalizovať CAD"><MinIcon /></CaptionButton>
      <CaptionButton aria-label="Maximalizovať CAD"><MaxIcon /></CaptionButton>
      <CaptionButton aria-label="Zavrieť CAD"><Cross s={10} /></CaptionButton>
    </CadTitle>
    <CadTabs>
      <CadTab aria-label="Dokument"><Chevron /></CadTab>
      <SelectWrap><select aria-label="Zobrazenie"><option>Standard</option></select><Chevron /></SelectWrap>
    </CadTabs>
    <CadBar $h={36} $pad={15} $gap={12}>
      <ToolButton aria-label="Rez"><Ico w={24} sw={1.300}><path d="M1 11l10-4 9 4v6l-10 5-9-5zM1 11l9 5 10-5M10 16v6M4 2v9M4 2l6 4" /><path d="M4 2h18v12" strokeDasharray="2 2" /><path d="M4 2l12 6v9l-12-5" /></Ico></ToolButton>
      <Divider $h={30} />
      <ToolButton aria-label="Nastavenia"><Ico w={24} sw={1.400}><path d="M2 18.500L11 11Q9 5 13 3q3-1.500 6 0l-4 3 1 3 3 1 3.500-3q1 4-2 6.500-2.500 2-6 .5l-8 8.500Q4.500 24 2.500 22 1 20 2 18.500z" /></Ico></ToolButton>
      <ToolButton aria-label="Hľadať názov">
        <Ico w={26} h={26} sw={1.400}><path d="M1 21h4v4H1zM9 8h4v4H9zM4 21l6-9M13 10h4" /><circle cx="18.500" cy="12.500" r="4" /><path d="M21.500 15.500l4 4" strokeWidth="2" /><text x="11" y="6" fontSize="8" fill="currentColor" stroke="none" fontFamily="Open Sans, sans-serif">ABC</text></Ico>
      </ToolButton>
      <Divider $h={30} />
      <ToolButton aria-label="Informácie"><Ico w={24} sw={1.500}><circle cx="14" cy="3.500" r="2.500" /><path d="M9.500 8.500h6.500v11h3v3H9v-3h3v-8H9.500z" /></Ico></ToolButton>
      <ToolButton aria-label="Pomocník"><Ico w={24} sw={1.400}><path d="M3 3l13 5-4 2.500 5 6-2.500 2-4.500-6-3 3z" /><text x="17" y="22" fontSize="14" fontWeight="700" fill="currentColor" stroke="none" fontFamily="Open Sans, sans-serif">?</text></Ico></ToolButton>
    </CadBar>
    <CadMain>
      <CadLeft>
        <CadBar $h={39} $pad={12} $gap={10}>
          {cubeMarks.map((m, i) => <ToolButton key={m} aria-label={`Pohľad ${i + 1}`}><Cube mark={m} /></ToolButton>)}
          <ToolButton $on aria-label="Mriežka"><Ico w={20} sw={1.400}><path d="M5 0v20M10 0v20M15 0v20M0 5h20M0 10h20M0 15h20" /></Ico></ToolButton>
        </CadBar>
        <Viewport><Scene /></Viewport>
      </CadLeft>
      <SideBar>
        <SideTop aria-label="Rozbaliť"><Ico w={10}><path d="M5 1L1 5l4 4M9 1L5 5l4 4" /></Ico></SideTop>
        {sideIcons.map((d, i) => <SideButton key={d} aria-label={`Panel ${i + 1}`}><Ico w={14}><path d={d} /></Ico></SideButton>)}
      </SideBar>
    </CadMain>
    <CadStatus>
      <CadFlap><Ico w={60} h={12}><path d="M0 12L2 10L11 .5H60V12z" fill="#262c35" stroke="none" /><path d="M0 9.500L2 9.500L11 .5H60" stroke="#4a525b" /><path d="M29 8l4-4 4 4" /></Ico></CadFlap>
      <Divider $h={27} />
      <Badge>0</Badge>
    </CadStatus>
  </CadWindow>
);

const Question = () => (
  <svg width="32" height="32" viewBox="0 0 32 32" aria-hidden="true">
    <defs><radialGradient id="q" cx=".5" cy=".25" r=".8"><stop offset="0" stopColor="#5f86e6" /><stop offset="1" stopColor="#142f96" /></radialGradient></defs>
    <circle cx="16" cy="16" r="15.500" fill="#e9ecf2" stroke="#8b929c" />
    <circle cx="16" cy="16" r="13.500" fill="url(#q)" />
    <text x="16" y="24" fontSize="23" fontWeight="700" textAnchor="middle" fill="#fff" fontFamily="Open Sans, sans-serif">?</text>
  </svg>
);

const App = () => (
  <Page>
    <GlobalStyle />
    <Desktop>
      <Excel />
      <Cad />
      <Dialog role="dialog" aria-label="Doplniť údaje?">
        <DialogTitle><h2>Doplniť údaje?</h2><button aria-label="Zavrieť dialóg"><Cross /></button></DialogTitle>
        <DialogBody><Question /><p>Prajete si doplniť údaje o nástroji zo súboru ´Parametre nástrojov.xlsm´</p></DialogBody>
        <DialogFoot>
          <DialogButton $focus>Án<u>o</u></DialogButton>
          <DialogButton><u>N</u>ie</DialogButton>
        </DialogFoot>
      </Dialog>
    </Desktop>
    <Taskbar>
      <StartBox aria-label="Štart" />
      <TaskButton $w={50} aria-label="Zobrazenie úloh"><Ico w={17}><path d="M1 1v2.500h10V1M1.500 5.500h9v6h-9zM1 16v-2.500h10V16M14.500 1v3M14.500 11v5" /><path d="M13 5.500h3v3h-3z" fill="currentColor" stroke="none" /></Ico></TaskButton>
      <TaskButton $open aria-label="Prieskumník"><svg width="22" height="20" viewBox="0 0 22 20"><path d="M0 1h9l2 2h11v15H0z" fill="#d6a32a" /><path d="M0 5h22v13H0z" fill="#fbd465" /><path d="M4 19v-6q0-2 2-2h10q2 0 2 2v6h-4v-4H8v4z" fill="#4a95cf" /></svg></TaskButton>
      <TaskButton aria-label="Outlook"><TeamLetter letter="O" color="#0a6fc2" dark="#0a6fc2" kind="mail" /></TaskButton>
      <TaskButton aria-label="Súbor"><svg width="16" height="21" viewBox="0 0 16 21"><path d="M0 0h11l5 5v16H0z" fill="#f3f3f3" /><path d="M11 0v5h5" fill="#c9c9c9" stroke="#888" /></svg></TaskButton>
      <TaskButton aria-label="Edge">
        <svg width="24" height="24" viewBox="0 0 24 24">
          <defs><linearGradient id="e1" x1="0" y1="0" x2="1" y2=".4"><stop offset="0" stopColor="#2aa9e6" /><stop offset="1" stopColor="#6ede5a" /></linearGradient></defs>
          <circle cx="12" cy="12" r="12" fill="#1273cf" />
          <path d="M0 12A12 12 0 0 1 24 11q0 5-6 5-3 0-3-1 2-2 1-5-2-4-7-4-6 1-9 6z" fill="url(#e1)" />
          <path d="M9 13q-1 8 8 8 3 0 5-2-4 5-10 5-8-1-8-8 1-6 6-7-1 2-1 4z" fill="#0b4a94" />
          <path d="M12 11q3 0 3 4 1 3 6 1l3-2q-2 4-7 4-6-1-5-7z" fill="#20343f" />
        </svg>
      </TaskButton>
      <TaskButton aria-label="Access"><TeamLetter letter="A" color="#a4373a" dark="#a4373a" kind="db" /></TaskButton>
      <TaskButton aria-label="Word"><TeamLetter letter="W" color="#2b579a" dark="#2b579a" kind="doc" /></TaskButton>
      <TaskButton $active aria-label="Excel"><TeamLetter letter="X" color="#217346" dark="#1e6f42" kind="grid" /></TaskButton>
      <TaskButton aria-label="PowerPoint"><TeamLetter letter="P" color="#d24726" dark="#d24726" kind="chart" /></TaskButton>
      <TaskButton aria-label="Výstrižky"><svg width="22" height="24" viewBox="0 0 22 24" fill="none"><path d="M3 2q10-3 14 4 3 7-3 11" stroke="#c9431f" strokeWidth="4" /><path d="M3 2l2 8 5 3" stroke="#d6603a" strokeWidth="2" /><path d="M10 2l1 14M13 15l-6-6" stroke="#d8dde2" strokeWidth="3" /><circle cx="4" cy="18" r="3" stroke="#1d6fc0" strokeWidth="2" /><circle cx="12" cy="20" r="3" stroke="#2493dd" strokeWidth="2" /></svg></TaskButton>
      <TaskButton aria-label="Kalkulačka"><svg width="18" height="24" viewBox="0 0 18 24"><path d="M0 0h18v24H0z" fill="#6f7f88" /><path d="M2 2h14v4H2z" fill="#55c6e8" /><path d="M2 8h4v4H2zM7 8h4v4H7zM12 8h4v4h-4zM2 13h4v4H2zM7 13h4v4H7zM2 18h4v4H2zM7 18h4v4H7z" fill="#e6ebee" /><path d="M12 13h4v9h-4z" fill="#12508f" /></svg></TaskButton>
      <TaskButton $open aria-label="Nextcloud"><svg width="24" height="24" viewBox="0 0 24 24" fill="none" stroke="#fff" strokeWidth="2"><circle cx="12" cy="12" r="12" fill="#159bd8" stroke="none" /><circle cx="12" cy="12" r="3.500" /><circle cx="5.500" cy="12" r="2" /><circle cx="18.500" cy="12" r="2" /></svg></TaskButton>
      <TaskButton $open aria-label="Príkazový riadok"><svg width="22" height="18" viewBox="0 0 22 18"><path d="M.5.5h21v17H.5z" fill="#050505" stroke="#9aa5ac" /><path d="M1 1h20v2H1z" fill="#d5dadd" /><path d="M13 9.500h5M3 6v3h2M7 6v1M7 8v1M9 6l1 3" stroke="#ddd" fill="none" /></svg></TaskButton>
      <TaskButton $open aria-label="CAD"><svg width="22" height="22" viewBox="0 0 22 22"><path d="M0 4h22L11 22z" fill="#2f6fc6" /><path d="M6 8h9l-4 8z" fill="#1c2f42" /><path d="M14 0h8v3h-3v13h-2V3h-3z" fill="#9aa3ab" /></svg></TaskButton>
      <Spacer />
      <Tray>
        <button aria-label="Skryté ikony"><Ico w={12} sw={1.300}><path d="M0 9l6-6 6 6" /></Ico></button>
        <button aria-label="Sieť"><Ico w={18} h={16} sw={1.200}><path d="M5 2.500h11v8H5zM10.500 10.500v3M7 13.500h7M1.500 1h4v4h-4zM3.500 5v8h3" /></Ico></button>
        <button aria-label="Hlasitosť"><Ico w={17} h={16} sw={1.200}><path d="M1 6h3l4-4v12l-4-4H1zM10 6q1.500 2 0 4M12 4q3 4 0 8M14.500 2q4 6 0 12" /></Ico></button>
        <button aria-label="Jazyk">SLK</button>
        <Clock>11:16<br />22. 1. 2025</Clock>
        <button aria-label="Oznámenia"><Ico w={18} sw={1.300}><path d="M1 2h16v12h-6l-3 3v-3H1z" /></Ico></button>
        <ShowDesktop aria-label="Zobraziť plochu" />
      </Tray>
    </Taskbar>
  </Page>
);

export default App;
